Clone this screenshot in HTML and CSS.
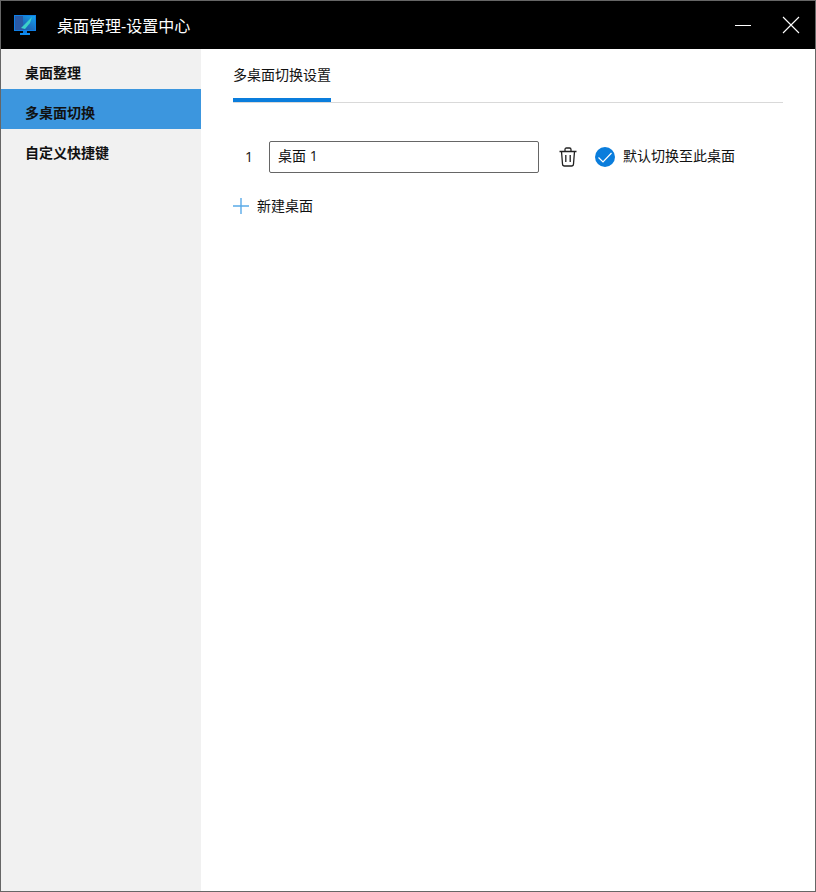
FILE: index.html
```
<!DOCTYPE html>
<html lang="zh-CN">
<head>
<meta charset="utf-8">
<title>桌面管理-设置中心</title>
<link rel="stylesheet" href="styles.css">
</head>
<body>
<div class="window">
  <header class="titlebar">
    <svg class="app-icon" width="24" height="22" viewBox="0 0 24 22">
      <defs>
        <linearGradient id="scr" x1="0" y1="1" x2="1" y2="0">
          <stop offset="0" stop-color="#1c4f9c"/>
          <stop offset="0.5" stop-color="#1c6fc0"/>
          <stop offset="1" stop-color="#12a4ee"/>
        </linearGradient>
      </defs>
      <rect x="1" y="0" width="22" height="16" fill="#0f7fe6"/>
      <rect x="2" y="1" width="20" height="14" fill="url(#scr)"/>
      <rect x="2" y="1" width="8" height="14" fill="#2a5aa5"/>
      <path d="M8 13 L19 2 L17 8 L12 14 Z" fill="#3cd0c8"/>
      <rect x="10" y="16" width="4" height="2" fill="#0b7be0"/>
      <rect x="7" y="18" width="10" height="2" fill="#0f8cf0"/>
    </svg>
    <span class="title">桌面管理-设置中心</span>
    <div class="win-controls">
      <svg class="win-min" width="16" height="16" viewBox="0 0 16 16"><path d="M0 8.5H16" stroke="#fff" fill="none"/></svg>
      <svg class="win-close" width="18" height="18" viewBox="0 0 18 18"><path d="M1 1L17 17M17 1L1 17" stroke="#fff" stroke-width="1.1" fill="none"/></svg>
    </div>
  </header>
  <div class="body">
    <nav class="sidebar">
      <div class="nav-item">桌面整理</div>
      <div class="nav-item active">多桌面切换</div>
      <div class="nav-item">自定义快捷键</div>
    </nav>
    <main class="content">
      <div class="tabs"><div class="tab">多桌面切换设置</div></div>
      <div class="desk-row">
        <span class="desk-num">1</span>
        <div class="desk-input">桌面 1</div>
        <svg class="trash" width="18" height="20" viewBox="0 0 18 20">
          <path d="M0.5 4.5H17.5M6 4.5V2.5Q6 1 7.5 1H10.5Q12 1 12 2.5V4.5M2.5 4.5L3.5 17Q3.6 19 5.5 19H12.500Q14.400 19 14.500 17L15.500 4.500M6.800 8V15M11.200 8V15" stroke="#222" stroke-width="1.300" fill="none"/>
        </svg>
        <svg class="check" width="20" height="20" viewBox="0 0 20 20">
          <circle cx="10" cy="10" r="10" fill="#0a7ddc"/>
          <path d="M3.500 10.500L8 15L16.500 6" stroke="#fff" stroke-width="1.200" fill="none"/>
        </svg>
        <span class="check-label">默认切换至此桌面</span>
      </div>
      <div class="add-row">
        <svg class="plus" width="16" height="16" viewBox="0 0 16 16"><path d="M8 0V16M0 8H16" stroke="#5aaae8" stroke-width="1.400" fill="none"/></svg>
        <span class="add-label">新建桌面</span>
      </div>
    </main>
  </div>
</div>
</body>
</html>
```
FILE: styles.css
```
* { box-sizing: border-box; }
html, body { margin: 0; padding: 0; height: 100%; }
body {
  font-family: "Open Sans", "Noto Sans CJK SC", sans-serif;
  font-size: 14px;
  line-height: 20px;
  color: #111;
  background: #fff;
  overflow: hidden;
}
.window {
  width: 816px;
  height: 892px;
  border: 1px solid #666;
  display: flex;
  flex-direction: column;
}
.titlebar {
  height: 48px;
  background: #000;
  color: #fff;
  display: flex;
  align-items: center;
  padding: 0 15px 0 12px;
  flex: none;
}
.app-icon { flex: none; margin-right: 20px; margin-top: 1px; }
.title { font-size: 16px; line-height: 20px; margin-top: 2px; }
.win-controls {
  margin-left: auto;
  display: flex;
  align-items: center;
  gap: 31px;
}
.win-min { display: block; margin-top: -1px; }
.win-close { display: block; }
.body { flex: 1; display: flex; min-height: 0; }
.sidebar { width: 200px; background: #f1f1f1; flex: none; }
.nav-item {
  height: 40px;
  padding: 7px 0 0 24px;
  display: flex;
  align-items: center;
  font-weight: 700;
  font-size: 14px;
  color: #111;
}
.nav-item.active { background: #3c96de; }
.content { flex: 1; padding: 0 32px; }
.tabs { height: 54px; border-bottom: 1px solid #d9d9d9; display: flex; }
.tab {
  width: 98px;
  height: 53px;
  border-bottom: 4px solid #0a7ddc;
  padding-top: 16px;
  font-size: 14px;
  white-space: nowrap;
}
.desk-row {
  display: flex;
  align-items: center;
  height: 32px;
  margin-top: 38px;
}
.desk-num { width: 36px; padding: 0 0 1px 12px; font-size: 14px; }
.desk-input {
  width: 270px;
  height: 32px;
  border: 1px solid #666;
  border-radius: 2px;
  padding: 4px 8px 0;
  font-size: 14px;
  flex: none;
}
.trash { margin-left: 20px; flex: none; }
.check { margin-left: 18px; flex: none; }
.check-label { margin-left: 8px; white-space: nowrap; font-size: 14px; padding-bottom: 2px; }
.add-row {
  display: flex;
  align-items: center;
  gap: 8px;
  margin-top: 17px;
  height: 32px;
  font-size: 14px;
}
.plus { flex: none; }
```
